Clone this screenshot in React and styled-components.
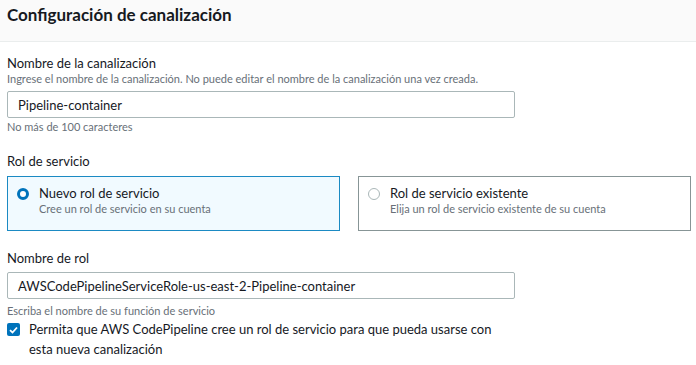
import React from 'react';
import styled, { createGlobalStyle } from 'styled-components';

const Global = createGlobalStyle`
  body {
    margin: 0;
    background: #ffffff;
    font-family: Lato, "Noto Sans", sans-serif;
    color: #16191f;
  }
`;

const Panel = styled.div`
  width: 696px;
  height: 365px;
  overflow: hidden;
  background: #fff;
`;

const Header = styled.div`
  height: 42px;
  background: #fafafa;
  border-bottom: 1px solid #eaeded;
  box-sizing: border-box;
  padding: 4px 7px 0;
`;

const Title = styled.h2`
  margin: 0;
  font-size: 17px;
  font-weight: 700;
  line-height: 22px;
  color: #16191f;
`;

const Body = styled.div`
  padding: 13px 5px 0 7px;
  display: flex;
  flex-direction: column;
`;

const Field = styled.div`
  display: flex;
  flex-direction: column;
  margin-bottom: ${p => p.$mb || 0}px;
`;

const Label = styled.div`
  font-size: 13px;
  line-height: 17px;
  color: #16191f;
`;

const Desc = styled.div`
  font-size: 11px;
  line-height: 14px;
  color: #687078;
`;

const Hint = styled(Desc)`
  margin-top: ${p => p.$mt}px;
`;

const Input = styled.div`
  margin-top: 5px;
  width: 508px;
  height: 27px;
  box-sizing: border-box;
  border: 1px solid #aab7b8;
  border-radius: 2px;
  padding: 0 10px;
  display: flex;
  align-items: center;
  font-size: 13px;
  color: #16191f;
`;

const Cards = styled.div`
  margin-top: 6px;
  display: grid;
  grid-template-columns: 333px 333px;
  column-gap: 18px;
`;

const Card = styled.div`
  height: 55px;
  box-sizing: border-box;
  border: 1px solid ${p => (p.$active ? '#1b8ac3' : '#879596')};
  background: ${p => (p.$active ? '#f1faff' : '#fff')};
  display: flex;
  align-items: flex-start;
  padding: 7px 10px 0 9px;
  gap: 10px;
`;

const Radio = styled.span`
  flex: none;
  width: 12px;
  height: 12px;
  margin-top: 4px;
  border-radius: 50%;
  box-sizing: border-box;
  border: ${p => (p.$on ? '3.5px solid #0073bb' : '1px solid #aab7b8')};
  background: #fff;
`;

const CardText = styled.div`
  display: flex;
  flex-direction: column;
`;

const CardTitle = styled.div`
  font-size: 13px;
  line-height: 18px;
  color: #16191f;
`;

const Check = styled.div`
  margin-top: 1px;
  display: flex;
  align-items: flex-start;
  gap: 9px;
  width: 500px;
`;

const Box = styled.span`
  flex: none;
  width: 13px;
  height: 13px;
  margin-top: 4px;
  border-radius: 2px;
  background: #0073bb;
  display: flex;
  align-items: center;
  justify-content: center;
`;

const CheckLabel = styled.div`
  font-size: 13px;
  line-height: 20px;
  color: #16191f;
`;

export default function App() {
  return (
    <Panel>
      <Global />
      <Header>
        <Title>Configuración de canalización</Title>
      </Header>
      <Body>
        <Field $mb={19}>
          <Label>Nombre de la canalización</Label>
          <Desc>Ingrese el nombre de la canalización. No puede editar el nombre de la canalización una vez creada.</Desc>
          <Input>Pipeline-container</Input>
          <Hint $mt={2}>No más de 100 caracteres</Hint>
        </Field>
        <Field $mb={19}>
          <Label>Rol de servicio</Label>
          <Cards>
            <Card $active>
              <Radio $on />
              <CardText>
                <CardTitle>Nuevo rol de servicio</CardTitle>
                <Desc>Cree un rol de servicio en su cuenta</Desc>
              </CardText>
            </Card>
            <Card>
              <Radio />
              <CardText>
                <CardTitle>Rol de servicio existente</CardTitle>
                <Desc>Elija un rol de servicio existente de su cuenta</Desc>
              </CardText>
            </Card>
          </Cards>
        </Field>
        <Field>
          <Label>Nombre de rol</Label>
          <Input>AWSCodePipelineServiceRole-us-east-2-Pipeline-container</Input>
          <Hint $mt={5}>Escriba el nombre de su función de servicio</Hint>
          <Check>
            <Box>
              <svg width="9" height="8" viewBox="0 0 9 8">
                <path d="M1 4.2 L3.5 6.5 L8 1.5" fill="none" stroke="#fff" strokeWidth="1.8" />
              </svg>
            </Box>
            <CheckLabel>Permita que AWS CodePipeline cree un rol de servicio para que pueda usarse con esta nueva canalización</CheckLabel>
          </Check>
        </Field>
      </Body>
    </Panel>
  );
}
